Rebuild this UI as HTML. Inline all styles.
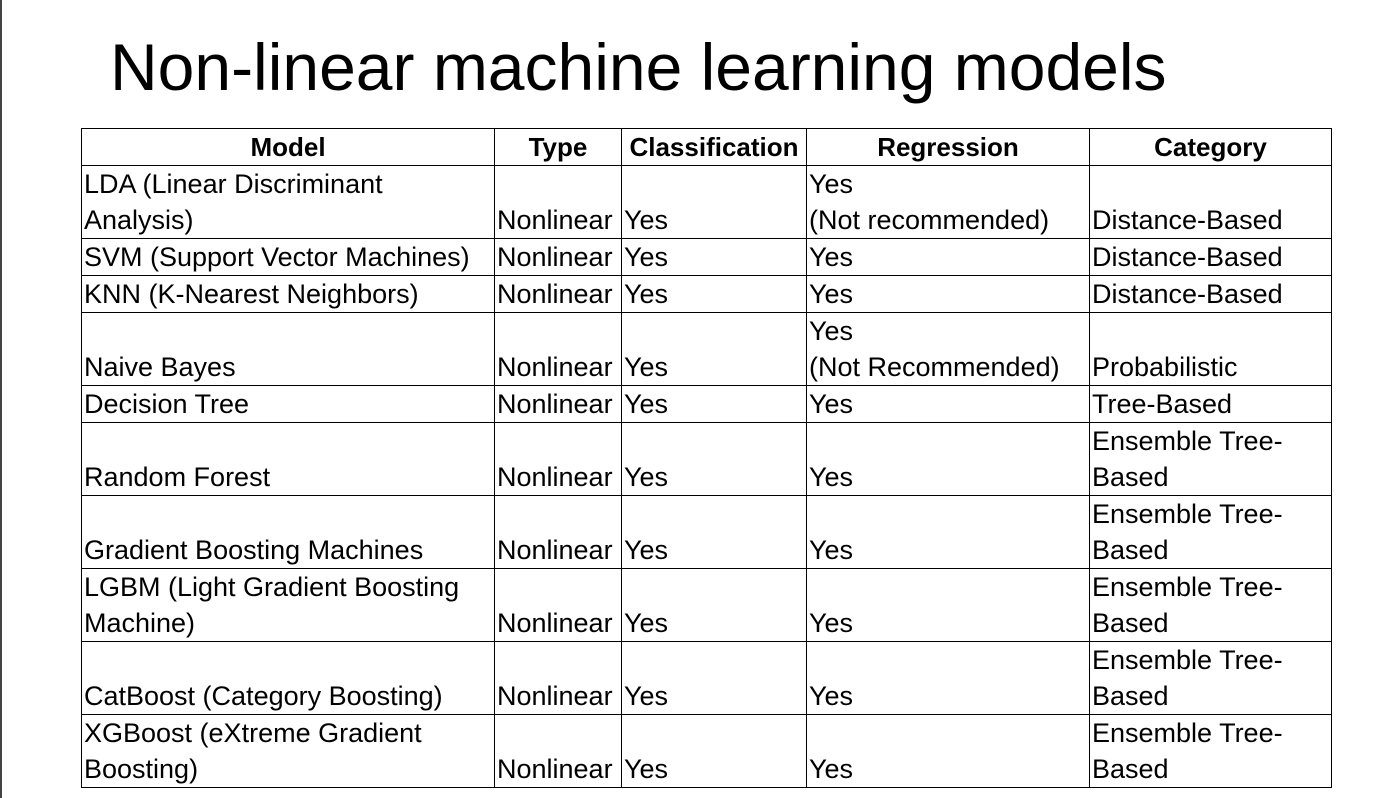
<!DOCTYPE html>
<html><head><style>
body{margin:0;width:1384px;height:798px;background:#fff;position:relative;overflow:hidden;font-family:"Liberation Sans",sans-serif;color:#000}
.lb{position:absolute;left:0;top:0;width:2px;height:798px;background:#444}
h1{position:absolute;left:110px;top:22px;margin:0;font-weight:normal;font-size:66px;line-height:90px;white-space:nowrap}
table{position:absolute;left:81px;top:128px;border-collapse:collapse;font-size:27px;table-layout:fixed}
td,th{border:1.5px solid #000;padding:0 0 0 2px;vertical-align:bottom;line-height:36px;white-space:nowrap;overflow:hidden}
th{text-align:center;font-weight:bold;height:36px;font-size:26px;padding:0}
tr.s td{height:35.5px}
tr.d td{height:71.5px}
</style></head><body>
<div class="lb"></div>
<h1>Non-linear machine learning models</h1>
<table>
<colgroup><col style="width:413px"><col style="width:127px"><col style="width:185px"><col style="width:283px"><col style="width:242px"></colgroup>
<tr><th>Model</th><th>Type</th><th>Classification</th><th>Regression</th><th>Category</th></tr>
<tr class="d"><td>LDA (Linear Discriminant<br>Analysis)</td><td>Nonlinear</td><td>Yes</td><td>Yes<br>(Not recommended)</td><td>Distance-Based</td></tr>
<tr class="s"><td>SVM (Support Vector Machines)</td><td>Nonlinear</td><td>Yes</td><td>Yes</td><td>Distance-Based</td></tr>
<tr class="s"><td>KNN (K-Nearest Neighbors)</td><td>Nonlinear</td><td>Yes</td><td>Yes</td><td>Distance-Based</td></tr>
<tr class="d"><td>Naive Bayes</td><td>Nonlinear</td><td>Yes</td><td>Yes<br>(Not Recommended)</td><td>Probabilistic</td></tr>
<tr class="s"><td>Decision Tree</td><td>Nonlinear</td><td>Yes</td><td>Yes</td><td>Tree-Based</td></tr>
<tr class="d"><td>Random Forest</td><td>Nonlinear</td><td>Yes</td><td>Yes</td><td>Ensemble Tree-<br>Based</td></tr>
<tr class="d"><td>Gradient Boosting Machines</td><td>Nonlinear</td><td>Yes</td><td>Yes</td><td>Ensemble Tree-<br>Based</td></tr>
<tr class="d"><td>LGBM (Light Gradient Boosting<br>Machine)</td><td>Nonlinear</td><td>Yes</td><td>Yes</td><td>Ensemble Tree-<br>Based</td></tr>
<tr class="d"><td>CatBoost (Category Boosting)</td><td>Nonlinear</td><td>Yes</td><td>Yes</td><td>Ensemble Tree-<br>Based</td></tr>
<tr class="d"><td>XGBoost (eXtreme Gradient<br>Boosting)</td><td>Nonlinear</td><td>Yes</td><td>Yes</td><td>Ensemble Tree-<br>Based</td></tr>
</table>
</body></html>
